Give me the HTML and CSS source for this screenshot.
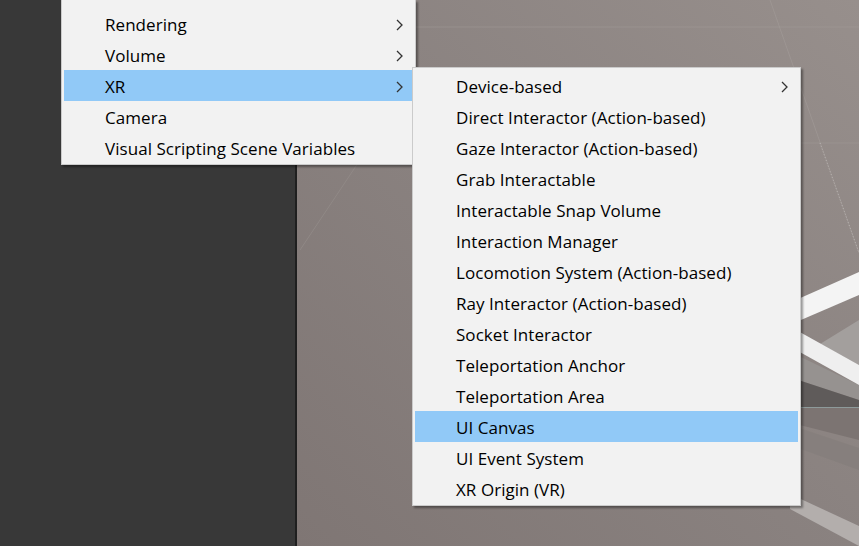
FILE: index.html
```html
<!DOCTYPE html>
<html>
<head>
<meta charset="utf-8">
<link rel="stylesheet" href="styles.css">
</head>
<body>
<div class="app">
  <div class="side-panel"></div>
  <div class="scene">
    <svg class="scene-art" width="562" height="546" viewBox="297 0 562 546" xmlns="http://www.w3.org/2000/svg">
      <defs>
        <linearGradient id="bg" x1="1" y1="0" x2="0" y2="1">
          <stop offset="0" stop-color="#978f8c"/>
          <stop offset="0.5" stop-color="#8a8280"/>
          <stop offset="1" stop-color="#7f7674"/>
        </linearGradient>
      </defs>
      <rect x="297" y="0" width="562" height="546" fill="url(#bg)"/>
      <line x1="297" y1="27" x2="859" y2="27" stroke="#a39c99" stroke-width="1" opacity="0.5"/>
      <line x1="297" y1="143" x2="859" y2="143" stroke="#a39c99" stroke-width="1" opacity="0.45"/>
      <line x1="770" y1="0" x2="859" y2="253" stroke="#a39c99" stroke-width="1" opacity="0.6"/>
      <line x1="820" y1="143" x2="859" y2="253" stroke="#c8c4c2" stroke-width="1" stroke-dasharray="1 2" opacity="0.7"/>
      <line x1="360" y1="160" x2="300" y2="250" stroke="#958e8b" stroke-width="1" opacity="0.7"/>
      <polygon points="780,347 859,385 859,400 780,374" fill="#969290"/>
      <polygon points="780,374 859,400 859,408 780,408" fill="#5f5b5a"/>
      <line x1="780" y1="407.5" x2="859" y2="407.5" stroke="#8d9a9a" stroke-width="1"/>
      <polygon points="780,408 859,408 859,440 780,420" fill="#7c7472"/>
      <polygon points="790,425 859,448 859,470 790,445" fill="#857e7c" opacity="0.8"/>
      <polygon points="820,344 859,320 859,365" fill="#a39f9d"/>
      <polygon points="780,307 859,272 859,295 780,329" fill="#f4f4f4"/>
      <polygon points="780,321 859,365 859,385 780,341" fill="#efefef"/>
      <polygon points="790,494 859,526 859,546 790,509" fill="#b3aeac"/>
    </svg>
  </div>
</div>

<div class="menu menu-main">
  <div class="item"><span class="label">Rendering</span><svg class="chev" width="7" height="12" viewBox="0 0 7 12"><path d="M1 1 L6 6 L1 11" fill="none" stroke="#333" stroke-width="1.3"/></svg></div>
  <div class="item"><span class="label">Volume</span><svg class="chev" width="7" height="12" viewBox="0 0 7 12"><path d="M1 1 L6 6 L1 11" fill="none" stroke="#333" stroke-width="1.3"/></svg></div>
  <div class="item active"><span class="label">XR</span><svg class="chev" width="7" height="12" viewBox="0 0 7 12"><path d="M1 1 L6 6 L1 11" fill="none" stroke="#333" stroke-width="1.3"/></svg></div>
  <div class="item"><span class="label">Camera</span></div>
  <div class="item"><span class="label">Visual Scripting Scene Variables</span></div>
</div>

<div class="menu menu-sub">
  <div class="item"><span class="label">Device-based</span><svg class="chev" width="7" height="12" viewBox="0 0 7 12"><path d="M1 1 L6 6 L1 11" fill="none" stroke="#333" stroke-width="1.3"/></svg></div>
  <div class="item"><span class="label">Direct Interactor (Action-based)</span></div>
  <div class="item"><span class="label">Gaze Interactor (Action-based)</span></div>
  <div class="item"><span class="label">Grab Interactable</span></div>
  <div class="item"><span class="label">Interactable Snap Volume</span></div>
  <div class="item"><span class="label">Interaction Manager</span></div>
  <div class="item"><span class="label">Locomotion System (Action-based)</span></div>
  <div class="item"><span class="label">Ray Interactor (Action-based)</span></div>
  <div class="item"><span class="label">Socket Interactor</span></div>
  <div class="item"><span class="label">Teleportation Anchor</span></div>
  <div class="item"><span class="label">Teleportation Area</span></div>
  <div class="item active"><span class="label">UI Canvas</span></div>
  <div class="item"><span class="label">UI Event System</span></div>
  <div class="item"><span class="label">XR Origin (VR)</span></div>
</div>
</body>
</html>
```

FILE: styles.css
```css
html, body {
  margin: 0;
  padding: 0;
  width: 859px;
  height: 546px;
  overflow: hidden;
}

body {
  position: relative;
  font-family: "Open Sans", "Noto Sans", sans-serif;
}

.app {
  display: flex;
  width: 859px;
  height: 546px;
}

.side-panel {
  width: 295px;
  flex: 0 0 295px;
  background: #383838;
  border-right: 2px solid #1f1f1f;
}

.scene {
  flex: 1;
  overflow: hidden;
}

.scene-art {
  display: block;
}

.menu {
  position: absolute;
  box-sizing: border-box;
  background: #f2f2f2;
  border: 1px solid #cbcbcb;
  padding: 2px;
  box-shadow: 2px 2px 2px rgba(0, 0, 0, 0.38);
  display: flex;
  flex-direction: column;
}

.menu-main {
  left: 61px;
  top: 0;
  width: 355px;
  border-top: none;
  padding-top: 8px;
  padding-bottom: 1px;
}

.menu-sub {
  left: 412px;
  top: 67px;
  width: 389px;
  padding-bottom: 1px;
}

.item {
  box-sizing: border-box;
  height: 31px;
  display: flex;
  align-items: center;
  justify-content: space-between;
  padding: 2px 10px 0 41px;
  color: #000;
  font-size: 17px;
  letter-spacing: 0.05px;
  white-space: nowrap;
}

.item.active {
  background: #91c9f7;
}

.label {
  line-height: 29px;
}

.chev {
  display: block;
}
```
